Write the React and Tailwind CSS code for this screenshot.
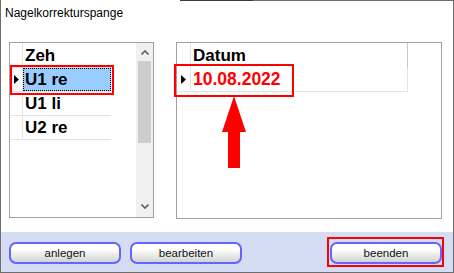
import React from "react";

const rows = [
  { label: "U1 re", selected: true },
  { label: "U1 li" },
  { label: "U2 re" },
];

// small black row pointer used in both grids
const Pointer = () => (
  <svg width="5" height="9" viewBox="0 0 5 9">
    <polygon points="0,0 5,4.5 0,9" fill="#000" />
  </svg>
);

const Chevron = ({ down }) => (
  <svg width="8" height="5" viewBox="0 0 8 5">
    <polyline
      points={down ? "0.5,0.5 4,4 7.5,0.5" : "0.5,4.5 4,1 7.5,4.5"}
      fill="none"
      stroke="#606060"
      strokeWidth="1.6"
    />
  </svg>
);

const Button = ({ children }) => (
  <button className="w-[112px] h-[22px] rounded-[7px] border-2 border-[#6464ff] bg-linear-to-b from-white from-30% to-[#d2d2d2] text-[11.5px] leading-[18px] text-[#111]">
    {children}
  </button>
);

const App = () => {
  return (
    <div
      className="relative w-[454px] h-[273px] bg-white border-l border-r border-b border-[#6d6d6d] flex flex-col overflow-hidden"
      style={{ fontFamily: '"Liberation Sans", Arial, sans-serif' }}
    >
      {/* top edge */}
      <div className="flex h-[1px] shrink-0">
        <div className="w-[179px]" />
        <div className="w-[73px] bg-[#3c3c48]" />
        <div className="flex-1 bg-[#6d6d6d]" />
      </div>

      {/* title */}
      <div className="h-[20px] pl-[4px] pt-[5px] text-[12px] leading-[14px] text-black">
        Nagelkorrekturspange
      </div>

      {/* grids */}
      <div className="flex mt-[21px] pl-[8px] gap-[22px]">
        {/* Zeh grid */}
        <div className="w-[145px] h-[176px] border border-[#a0a0a0] flex">
          <div className="flex-1 flex flex-col">
            <div className="flex h-[25px] border-b border-[#e4e4e4] w-[101px]">
              <div className="w-[13px] border-r border-[#e4e4e4]" />
              <div className="flex-1 pl-[2px] pt-[1px] text-[17px] font-bold leading-[23px] text-black">
                Zeh
              </div>
            </div>
            {rows.map((row) => (
              <div
                key={row.label}
                className="flex h-[24px] border-b border-[#e4e4e4] w-[101px]"
              >
                <div className="w-[13px] border-r border-[#e4e4e4] flex items-center justify-center">
                  {row.selected && <Pointer />}
                </div>
                <div
                  className={
                    row.selected
                      ? "flex-1 bg-[#99ccff] outline-1 outline-dotted outline-black -outline-offset-1 pl-[2px] text-[17px] font-bold leading-[23px] text-black"
                      : "flex-1 pl-[2px] text-[17px] font-bold leading-[23px] text-black"
                  }
                >
                  {row.label}
                </div>
              </div>
            ))}
          </div>

          {/* scrollbar */}
          <div className="w-[17px] bg-[#f0f0f0] flex flex-col">
            <div className="h-[17px] flex items-center justify-center pt-[2px]">
              <Chevron />
            </div>
            <div className="mt-[1px] h-[82px] mx-[2px] bg-[#cdcdcd]" />
            <div className="flex-1" />
            <div className="h-[17px] flex items-center justify-center pb-[4px]">
              <Chevron down />
            </div>
          </div>
        </div>

        {/* Datum grid */}
        <div className="w-[266px] h-[177px] border border-[#a0a0a0] flex flex-col">
          <div className="flex h-[25px] w-[231px]">
            <div className="w-[14px] border-r border-[#e4e4e4]" />
            <div className="flex-1 border-r border-[#c8c8c8] pl-[2px] pt-[1px] text-[17px] font-bold leading-[23px] text-black">
              Datum
            </div>
          </div>
          <div className="flex h-[24px] w-[231px] border-b border-[#e4e4e4]">
            <div className="w-[14px] border-r border-[#e4e4e4] flex items-center justify-center">
              <Pointer />
            </div>
            <div className="flex-1 border-r border-[#e4e4e4] pl-[2px] text-[17.5px] font-bold leading-[23px] text-[#ff0000]">
              10.08.2022
            </div>
          </div>
        </div>
      </div>

      <div className="flex-1" />

      {/* footer */}
      <div className="h-[40px] bg-[#d5ddf5] flex items-start pt-[10px] pl-[8px] pr-[11px]">
        <div className="flex gap-[9px]">
          <Button>anlegen</Button>
          <Button>bearbeiten</Button>
        </div>
        <div className="flex-1" />
        <Button>beenden</Button>
      </div>

      {/* red annotations */}
      <div className="absolute left-[9px] top-[65px] w-[104px] h-[30px] border-2 border-[#ff0000]" />
      <div className="absolute left-[173px] top-[64px] w-[120px] h-[33px] border-2 border-[#ff0000]" />
      <div className="absolute left-[326px] top-[237px] w-[117px] h-[30px] border-2 border-[#ff0000]" />
      <svg
        className="absolute left-[220px] top-[96px]"
        width="26"
        height="73"
        viewBox="0 0 26 73"
      >
        <polygon
          points="13,0 25,36 19,36 19,72 7,72 7,36 1,36"
          fill="#ff0000"
        />
      </svg>
    </div>
  );
};

export default App;
